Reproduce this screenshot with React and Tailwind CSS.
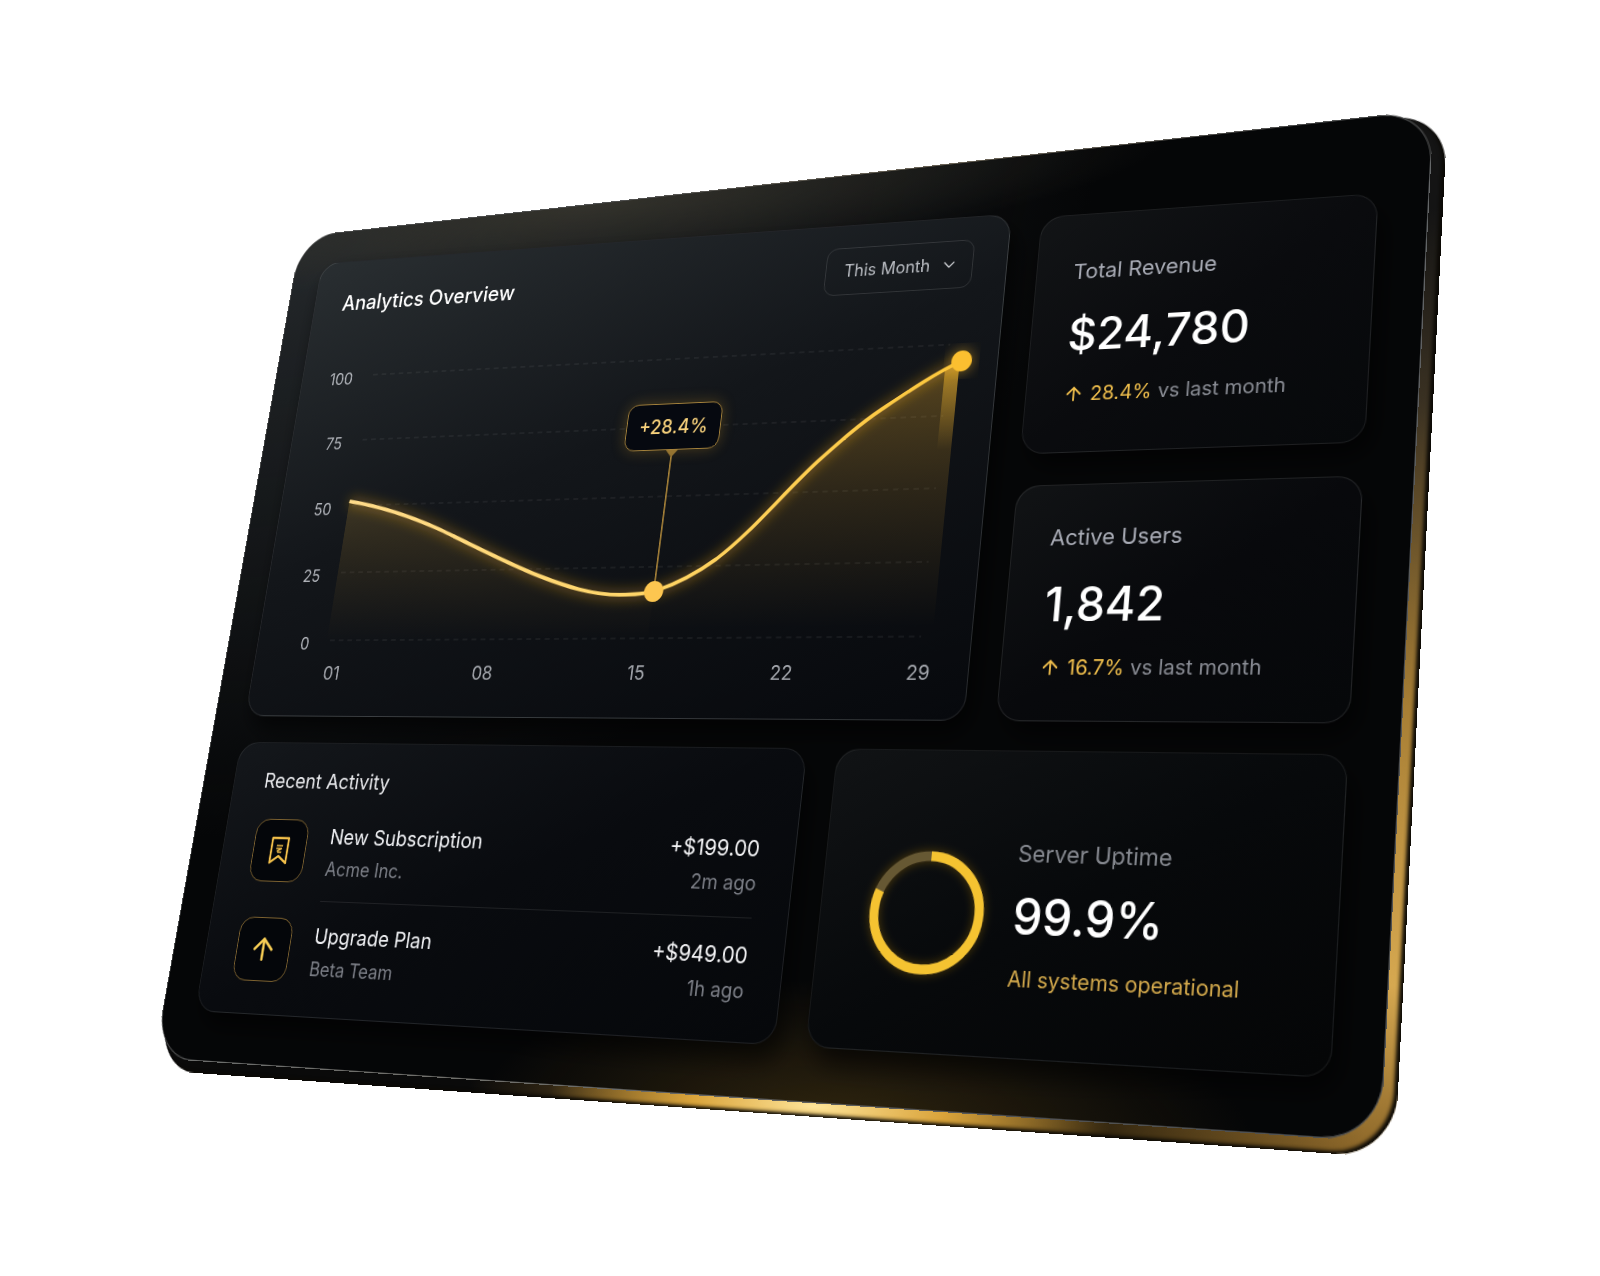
import { useLayoutEffect, useRef, useState } from "react";
import { ArrowUp, ChevronDown } from "lucide-react";

// Corners are top-left, top-right, bottom-right, bottom-left,
// as fractions of the board's own width and height.
const CONTENT = [[0.2683, 0.3161], [1.1492, 0.2248], [1.1092, 1.2945], [0.1625, 1.2139]];
const FACE = [[0.2508, 0.2837], [1.195, 0.131], [1.1508, 1.3714], [0.1283, 1.2704]];
const SLAB = [[0.2525, 0.2849], [1.2067, 0.1346], [1.1625, 1.3906], [0.1308, 1.2849]];

// Projective transform that takes the w x h box onto four corners.
function project(corners, w, h) {
  const [[x0, y0], [x1, y1], [x2, y2], [x3, y3]] = corners.map(([x, y]) => [x * w, y * h]);
  const dx1 = x1 - x2;
  const dx2 = x3 - x2;
  const dy1 = y1 - y2;
  const dy2 = y3 - y2;
  const sx = x0 - x1 + x2 - x3;
  const sy = y0 - y1 + y2 - y3;
  const den = dx1 * dy2 - dx2 * dy1;
  const g = (sx * dy2 - dx2 * sy) / den;
  const k = (dx1 * sy - sx * dy1) / den;
  const m = [
    (x1 - x0 + g * x1) / w, (y1 - y0 + g * y1) / w, 0, g / w,
    (x3 - x0 + k * x3) / h, (y3 - y0 + k * y3) / h, 0, k / h,
    0, 0, 1, 0,
    x0, y0, 0, 1,
  ];
  return `matrix3d(${m.join(",")})`;
}

const CURVE =
  "M0 145 C42 152 82 164 122 180 C170 200 212 219 252 233 C284 244 317 254 349 254 C362 254 376 254 388 251 C412 244 434 233 455 218 C492 190 522 150 556 118 C578 98 598 80 621 65 C647 48 674 30 702 18";

const ACTIVITY = [
  { name: "New Subscription", who: "Acme Inc.", amount: "+$199.00", when: "2m ago", icon: "bookmark" },
  { name: "Upgrade Plan", who: "Beta Team", amount: "+$949.00", when: "1h ago", icon: "arrow" },
];

function Card({ className, children }) {
  return (
    <section className={`rounded-3xl border shadow-[8px_14px_24px_rgba(0,0,0,0.65)] ${className}`}>
      {children}
    </section>
  );
}

function BookmarkIcon() {
  return (
    <svg viewBox="0 0 24 30" className="h-[30px] w-6" fill="none" stroke="#f2bf4a" strokeWidth="2.4" strokeLinejoin="round">
      <path d="M2 2h20v26l-10-7-10 7z" />
      <path d="M8 10h8M8 13h7M9 16l6-3M10 17h5" strokeWidth="1.6" />
    </svg>
  );
}

function Chart() {
  return (
    <div className="px-9">
      <div className="flex gap-[22px]">
        <div className="flex h-[308px] w-[30px] flex-col justify-between text-right text-lg leading-none text-[#b4b7bd]">
          {[100, 75, 50, 25, 0].map((n) => (
            <span key={n} className="flex h-2 items-center justify-end">{n}</span>
          ))}
        </div>
        <div className="relative h-[300px] flex-1">
          <svg viewBox="0 0 704 300" preserveAspectRatio="none" className="h-full w-full overflow-visible">
            <defs>
              <linearGradient id="fade" x1="0" y1="0" x2="0" y2="1">
                <stop offset="0" stopColor="#e0a52c" stopOpacity="0.34" />
                <stop offset="0.5" stopColor="#c8922a" stopOpacity="0.16" />
                <stop offset="1" stopColor="#c8922a" stopOpacity="0" />
              </linearGradient>
              <linearGradient id="fadeLeft" x1="0" y1="0" x2="0" y2="1">
                <stop offset="0" stopColor="#d8a63c" stopOpacity="0.2" />
                <stop offset="1" stopColor="#c8922a" stopOpacity="0" />
              </linearGradient>
              <linearGradient id="beam" x1="0" y1="0" x2="0" y2="1">
                <stop offset="0" stopColor="#f5b82e" stopOpacity="0.6" />
                <stop offset="1" stopColor="#f5b82e" stopOpacity="0" />
              </linearGradient>
              <linearGradient id="line" x1="0" y1="0" x2="1" y2="0">
                <stop offset="0" stopColor="#ffdb8a" />
                <stop offset="0.5" stopColor="#ffd66b" />
                <stop offset="1" stopColor="#fcc63a" />
              </linearGradient>
              <filter id="glow" x="-20%" y="-20%" width="140%" height="140%">
                <feGaussianBlur stdDeviation="7" />
              </filter>
            </defs>
            {[0, 75, 150, 225, 300].map((y) => (
              <line key={y} x1="4" x2="688" y1={y} y2={y} stroke="#fff" strokeOpacity="0.11" strokeDasharray="6 5" />
            ))}
            <path
              d="M0 145 C42 152 82 164 122 180 C170 200 212 219 252 233 C284 244 317 254 349 254 L388 251 V300 H0z"
              fill="url(#fadeLeft)"
            />
            <path
              d="M388 251 C412 244 434 233 455 218 C492 190 522 150 556 118 C578 98 598 80 621 65 C647 48 674 30 700 18 V290 H388z"
              fill="url(#fade)"
            />
            <path d="M685 26 L700 18 V110 H685z" fill="url(#beam)" />
            <path d={CURVE} fill="none" stroke="#e8a520" strokeOpacity="0.45" strokeWidth="8" filter="url(#glow)" />
            <path d={CURVE} fill="none" stroke="url(#line)" strokeWidth="4" />
            <path d="M388 100 V240" stroke="#b98f3d" strokeWidth="1.6" />
            <path d="M381 100 h14 l-7 8z" fill="#8d6f33" />
            <circle cx="702" cy="18" r="13" fill="#f5b82e" opacity="0.4" filter="url(#glow)" />
            <circle cx="388" cy="251" r="11" fill="#fdc650" />
            <circle cx="702" cy="18" r="11" fill="#fbbf30" />
          </svg>
          <div className="absolute left-[47%] top-[49px] flex h-[51px] w-[110px] items-center justify-center rounded-xl border border-[#a5823c] bg-[#060910] text-[21px] font-medium text-[#f8d27c] shadow-[0_0_16px_rgba(220,160,40,0.28)]">
            +28.4%
          </div>
        </div>
      </div>
      <div className="mt-3 grid grid-cols-[184fr_183fr_160fr_146fr_28fr] pl-[54px] text-xl leading-8 text-[#a4a7ad]">
        {["01", "08", "15", "22", "29"].map((d) => (
          <span key={d}>{d}</span>
        ))}
      </div>
    </div>
  );
}

function Stat({ title, value, change, className }) {
  return (
    <Card className={`flex flex-col justify-center pl-[38px] ${className}`}>
      <h2 className="text-[22px] leading-7 text-[#a9acb6]">{title}</h2>
      <p className="mt-6 text-[46px] font-medium leading-14 text-white">{value}</p>
      <p className="mt-5 flex items-center text-xl leading-7 text-[#8a8d95]">
        <ArrowUp size={22} strokeWidth={2} className="mr-1.5 text-[#f2c04d]" />
        <span className="mr-1.5 text-[#f2c04d]">{change}</span>
        vs last month
      </p>
    </Card>
  );
}

function RecentActivity() {
  return (
    <Card className="border-white/8 bg-linear-to-br from-[#14171b] via-[#090b0f] to-[#06080b] px-[38px] pb-8 pt-6">
      <h2 className="text-[22px] leading-8 text-[#e6e7ea]">Recent Activity</h2>
      <ul className="mt-6">
        {ACTIVITY.map((row, i) => (
          <li key={row.name}>
            {i > 0 && <div className="my-[17px] ml-[94px] h-px bg-white/9" />}
            <div className="flex items-center gap-7">
              <div className="flex size-[66px] items-center justify-center rounded-2xl border border-[#7d6230] bg-[#04060a]">
                {row.icon === "bookmark" ? <BookmarkIcon /> : <ArrowUp size={36} strokeWidth={2} className="text-[#f7cd55]" />}
              </div>
              <div className="flex-1">
                <p className="text-[22px] leading-9 text-[#eeeff2]">{row.name}</p>
                <p className="text-xl leading-8 text-[#7c7f87]">{row.who}</p>
              </div>
              <div className="text-right">
                <p className="text-[22px] leading-9 text-[#f4f4f6]">{row.amount}</p>
                <p className="text-xl leading-8 text-[#7c7f87]">{row.when}</p>
              </div>
            </div>
          </li>
        ))}
      </ul>
    </Card>
  );
}

function ServerUptime() {
  return (
    <Card className="flex items-center gap-7 border-white/7 bg-linear-to-br from-[#111315] via-[#07090b] to-[#050607] pl-[50px] pt-6">
      <svg viewBox="0 0 116 116" className="size-[116px] overflow-visible" fill="none">
        <defs>
          <filter id="ringGlow" x="-30%" y="-30%" width="160%" height="160%">
            <feGaussianBlur stdDeviation="5" />
          </filter>
        </defs>
        <circle cx="58" cy="58" r="53" stroke="#e0a020" strokeOpacity="0.3" strokeWidth="10" filter="url(#ringGlow)" />
        <circle cx="58" cy="58" r="53" stroke="#665833" strokeWidth="9" />
        <circle
          cx="58"
          cy="58"
          r="53"
          stroke="#f5c331"
          strokeWidth="9"
          pathLength="100"
          strokeDasharray="81 100"
          transform="rotate(-90 58 58)"
        />
      </svg>
      <div>
        <h2 className="text-[22px] leading-7 text-[#85888f]">Server Uptime</h2>
        <p className="mt-4 text-[46px] font-medium leading-14 text-white">99.9%</p>
        <p className="mt-4 text-xl leading-7 text-[#d3a94c]">All systems operational</p>
      </div>
    </Card>
  );
}

export default function App() {
  const board = useRef(null);
  const [size, setSize] = useState({ w: 1200, h: 832 });

  useLayoutEffect(() => {
    const el = board.current;
    const measure = () => setSize({ w: el.offsetWidth, h: el.offsetHeight });
    measure();
    const observer = new ResizeObserver(measure);
    observer.observe(el);
    return () => observer.disconnect();
  }, []);

  return (
    <main className="min-h-screen overflow-hidden bg-white font-['Inter',sans-serif]">
      <div ref={board} className="relative w-3/4">
        {/* body of the slab, seen along the right and bottom rim */}
        <div
          className="absolute inset-0 origin-top-left rounded-[46px] bg-[radial-gradient(ellipse_22%_5%_at_59%_99%,#ffe59a_0%,#d9a33a_45%,transparent_100%),linear-gradient(to_right,#0a0a0a_30%,transparent_56%,#1a1408cc_80%,transparent_98%),linear-gradient(to_bottom,#141414_10%,#3a3122_30%,#a87f35_60%,#d6a850_85%,#8a6528_100%)] shadow-[inset_-3px_-2px_3px_#0c0a06]"
          style={{ transform: project(SLAB, size.w, size.h) }}
        />
        {/* front face */}
        <div
          className="absolute inset-0 origin-top-left rounded-[46px] border border-white/30 bg-[#050607] bg-[radial-gradient(ellipse_30%_14%_at_62%_102%,#5a431680,transparent),radial-gradient(ellipse_50%_9%_at_30%_0%,#3a382fcc,transparent),radial-gradient(ellipse_75%_75%_at_0%_0%,#24282b,transparent)]"
          style={{ transform: project(FACE, size.w, size.h) }}
        />
        <div
          className="relative flex origin-top-left flex-col gap-7"
          style={{ transform: project(CONTENT, size.w, size.h) }}
        >
          <div className="grid grid-cols-[minmax(0,1fr)_340px] gap-8">
            <Card className="border-white/10 bg-linear-[160deg] from-[#292e31] via-[#13161a] via-45% to-[#07090d] pb-[30px] pt-6">
              <div className="mb-[60px] flex items-center justify-between px-9">
                <h2 className="text-2xl font-medium text-white">Analytics Overview</h2>
                <div className="relative">
                  <label htmlFor="range" className="sr-only">Range</label>
                  <select
                    id="range"
                    className="h-[52px] w-[163px] appearance-none rounded-xl border border-white/12 bg-transparent pl-5 text-lg text-[#b9bcc2]"
                  >
                    <option>This Month</option>
                  </select>
                  <ChevronDown size={20} strokeWidth={1.6} className="pointer-events-none absolute right-4 top-4 text-[#d0d2d6]" />
                </div>
              </div>
              <Chart />
            </Card>
            <div className="grid grid-rows-[31fr_29fr] gap-8 pt-1.5">
              <Stat
                title="Total Revenue"
                value="$24,780"
                change="28.4%"
                className="border-white/8 bg-linear-to-br from-[#121416] via-[#0a0b0e] to-[#07090b]"
              />
              <Stat
                title="Active Users"
                value="1,842"
                change="16.7%"
                className="border-white/10 bg-linear-to-br from-[#111315] via-[#08090c] to-[#06080a]"
              />
            </div>
          </div>
          <div className="grid grid-cols-[4fr_3fr] gap-8">
            <RecentActivity />
            <ServerUptime />
          </div>
        </div>
      </div>
    </main>
  );
}
